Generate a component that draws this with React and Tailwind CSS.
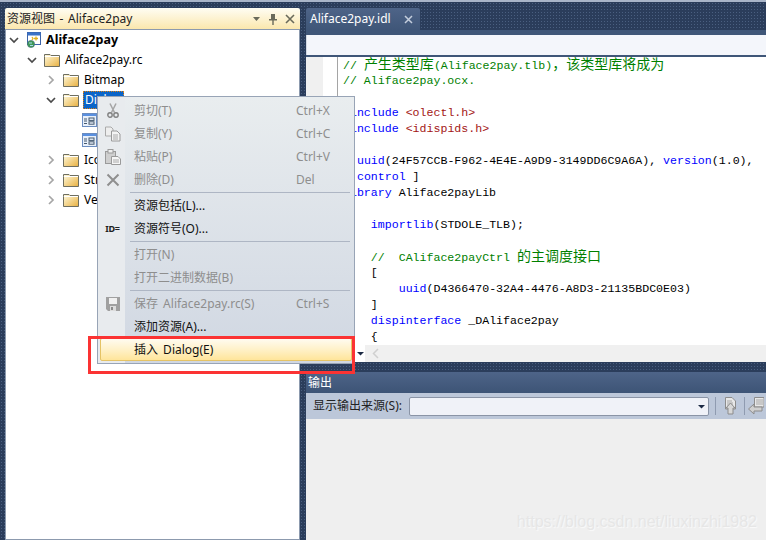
const sans = 'font-["Noto_Sans","Noto_Sans_CJK_SC",sans-serif]';

function Chevron({ open }) {
  return (
    <svg width="10" height="10" viewBox="0 0 10 10" className="shrink-0">
      {open ? (
        <path d="M1 3 L5 7 L9 3" fill="none" stroke="#4a4a4a" strokeWidth="1.7" />
      ) : (
        <path d="M3 1 L7 5 L3 9" fill="none" stroke="#a6a6a6" strokeWidth="1.7" />
      )}
    </svg>
  );
}

function Folder() {
  return (
    <svg width="16" height="14" viewBox="0 0 16 14" className="shrink-0">
      <defs>
        <linearGradient id="fg" x1="0" y1="0" x2="1" y2="1">
          <stop offset="0" stopColor="#fffbe0" />
          <stop offset="1" stopColor="#e8b040" />
        </linearGradient>
      </defs>
      <path d="M0.5 3.5 V1.5 H6 L7 2.5 H15.5 V13.5 H0.5 Z" fill="url(#fg)" stroke="#6e6e60" />
      <path d="M1 3.5 H15" stroke="#fff" />
    </svg>
  );
}

function ProjectIcon() {
  return (
    <svg width="16" height="16" viewBox="0 0 16 16" className="shrink-0">
      <rect x="1.5" y="0.5" width="13" height="12" fill="#fff" stroke="#3b62a8" />
      <rect x="1.5" y="0.5" width="13" height="3" fill="#3b72c8" />
      <path d="M6 5 l1 1.5 -1 1.5 M10 4.5 v4 M8 6.5 h4" stroke="#e0b020" strokeWidth="1.3" fill="none" />
      <circle cx="5" cy="12" r="3.6" fill="#3f9a55" stroke="#4a6a80" strokeWidth="0.6" />
      <path d="M3 11 h3 M4 13.5 h3" stroke="#a8d8f0" />
    </svg>
  );
}

function DialogIcon() {
  return (
    <svg width="15" height="14" viewBox="0 0 15 14" className="shrink-0">
      <rect x="0.5" y="0.5" width="14" height="13" fill="#e8f0fa" stroke="#6a8cc0" />
      <rect x="1" y="1" width="13" height="2" fill="#5a90e0" />
      <path d="M2 6 h3 M2 8 h3 M2 10.5 h3" stroke="#44586e" />
      <rect x="7" y="5" width="5" height="2.4" fill="none" stroke="#44586e" />
      <rect x="7" y="8.8" width="5" height="2.4" fill="none" stroke="#44586e" />
    </svg>
  );
}

function TreeRow({ indent, chevron, open, icon, children }) {
  return (
    <div className={`flex h-5 items-center ${indent}`}>
      <span className="flex w-[17px] shrink-0 justify-start">
        {chevron ? <Chevron open={open} /> : null}
      </span>
      {icon}
      {children}
    </div>
  );
}

function Tree() {
  return (
    <div className="flex-1 border border-[#8c9aae] bg-white text-[12px] text-black">
      <TreeRow indent="pl-[3px]" chevron open icon={<ProjectIcon />}>
        <span className="ml-[4px] text-[12.5px] font-bold">Aliface2pay</span>
      </TreeRow>
      <TreeRow indent="pl-[21px]" chevron open icon={<Folder />}>
        <span className="ml-[5px]">Aliface2pay.rc</span>
      </TreeRow>
      <TreeRow indent="pl-[40px]" chevron icon={<Folder />}>
        <span className="ml-[5px]">Bitmap</span>
      </TreeRow>
      <TreeRow indent="pl-[40px]" chevron open icon={<Folder />}>
        <span className="ml-[4px] flex h-[18px] w-[41px] items-center border border-dotted border-[#e08010] bg-[#0a64c8] pl-[1px] text-white">
          Dialog
        </span>
      </TreeRow>
      <div className="flex h-5 items-center pl-[76px]">
        <DialogIcon />
      </div>
      <div className="flex h-5 items-center pl-[76px]">
        <DialogIcon />
      </div>
      <TreeRow indent="pl-[40px]" chevron icon={<Folder />}>
        <span className="ml-[5px]">Icon</span>
      </TreeRow>
      <TreeRow indent="pl-[40px]" chevron icon={<Folder />}>
        <span className="ml-[5px]">String</span>
      </TreeRow>
      <TreeRow indent="pl-[40px]" chevron icon={<Folder />}>
        <span className="ml-[5px]">Version</span>
      </TreeRow>
    </div>
  );
}

const C = ({ children }) => <span className="text-[#008000]">{children}</span>;
const K = ({ children }) => <span className="text-[#0000ff]">{children}</span>;
const S = ({ children }) => <span className="text-[#a31515]">{children}</span>;
const Z = ({ children }) => <span className={`text-[14px] leading-none ${sans}`}>{children}</span>;

function CodeLine({ children }) {
  return <div className="h-4 whitespace-pre leading-4">{children || " "}</div>;
}

function Code() {
  return (
    <div className='min-w-0 flex-1 overflow-hidden pl-[5px] font-["Liberation_Mono",monospace] text-[11.6px] text-black'>
      <CodeLine><C>// <Z>产生类型库</Z>(Aliface2pay.tlb)<Z>，该类型库将成为</Z></C></CodeLine>
      <CodeLine><C>// Aliface2pay.ocx.</C></CodeLine>
      <CodeLine />
      <CodeLine><K>#include</K> <S>&lt;olectl.h&gt;</S></CodeLine>
      <CodeLine><K>#include</K> <S>&lt;idispids.h&gt;</S></CodeLine>
      <CodeLine />
      <CodeLine>[ <K>uuid</K>(24F57CCB-F962-4E4E-A9D9-3149DD6C9A6A), <K>version</K>(1.0),</CodeLine>
      <CodeLine>  <K>control</K> ]</CodeLine>
      <CodeLine><K>library</K> Aliface2payLib</CodeLine>
      <CodeLine>{"{"}</CodeLine>
      <CodeLine>    <K>importlib</K>(STDOLE_TLB);</CodeLine>
      <CodeLine />
      <CodeLine>    <C>//  CAliface2payCtrl <Z>的主调度接口</Z></C></CodeLine>
      <CodeLine>    [</CodeLine>
      <CodeLine>        <K>uuid</K>(D4366470-32A4-4476-A8D3-21135BDC0E03)</CodeLine>
      <CodeLine>    ]</CodeLine>
      <CodeLine>    <K>dispinterface</K> _DAliface2pay</CodeLine>
      <CodeLine>    {"{"}</CodeLine>
    </div>
  );
}

const G = "#9a9a9a";
const icons = {
  cut: (
    <svg width="12" height="15" viewBox="0 0 12 15">
      <path d="M3 0.5 L7.5 9.5 M9 0.5 L4.5 9.5" stroke="#a4a4a4" strokeWidth="1.5" fill="none" />
      <circle cx="3" cy="12" r="2.2" fill="none" stroke="#808080" strokeWidth="1.4" />
      <circle cx="9" cy="12" r="2.2" fill="none" stroke="#808080" strokeWidth="1.4" />
    </svg>
  ),
  copy: (
    <svg width="16" height="16" viewBox="0 0 16 16">
      <path d="M0.5 1 H6 L8 3 V10 H0.5 Z" fill="#eee" stroke="#aaa" />
      <path d="M6.5 5 H12 L15 8 V15 H6.5 Z" fill="#f4f4f4" stroke={G} />
      <path d="M8 9 h5 M8 11 h5 M8 13 h5" stroke="#aaa" />
    </svg>
  ),
  paste: (
    <svg width="16" height="16" viewBox="0 0 16 16">
      <rect x="0.5" y="2.5" width="10" height="12" fill="#cfcfcf" stroke={G} />
      <rect x="3" y="0.5" width="5" height="3.5" fill="#eee" stroke={G} />
      <path d="M6.5 7.5 H13 L15.5 10 V15.5 H6.5 Z" fill="#f6f6f6" stroke={G} />
      <path d="M8 11 h6 M8 13 h6" stroke="#aaa" />
    </svg>
  ),
  del: (
    <svg width="14" height="14" viewBox="0 0 14 14">
      <path d="M1.5 1.5 L12.5 12.5 M12.5 1.5 L1.5 12.5" stroke="#8f8f8f" strokeWidth="2" />
    </svg>
  ),
  save: (
    <svg width="14" height="14" viewBox="0 0 14 14">
      <path d="M0 0 H14 V14 H2 L0 12 Z" fill="#a0a0a0" />
      <rect x="3" y="1" width="8" height="6" fill="#f0f0f0" />
      <rect x="4" y="9" width="6" height="5" fill="#dcdcdc" />
      <rect x="5" y="10" width="2" height="3" fill="#8a8a8a" />
    </svg>
  ),
};

function Item({ icon, label, shortcut, disabled, active }) {
  return (
    <div className={`relative flex h-[23px] items-center ${disabled ? "text-[#8e8e8e]" : "text-[#111]"}`}>
      {active ? (
        <div className="absolute inset-x-[2px] inset-y-0 rounded-[2px] border border-[#e5c365] bg-gradient-to-b from-[#fffbf0] via-[#fff1c8] to-[#ffe59a]" />
      ) : null}
      <span className="relative flex w-[28px] shrink-0 justify-center pl-[1px]">{icon}</span>
      <span className="relative min-w-0 flex-1 pl-[8px] [word-spacing:2px]">{label}</span>
      {shortcut ? <span className="relative w-[58px] shrink-0">{shortcut}</span> : null}
    </div>
  );
}

function Sep() {
  return (
    <div className="flex h-[3px] items-center pl-[32px] pr-[4px]">
      <div className="h-px w-full bg-[#aeb6c4]" />
    </div>
  );
}

function Menu() {
  return (
    <div className={`absolute left-[97px] top-[96px] z-10 w-[258px] border border-[#98a4b6] py-[2px] text-[12px] bg-[linear-gradient(to_right,#e8ebee_0,#e8ebee_27px,transparent_27px),linear-gradient(to_bottom,#e9edef,#d0d7e2)] ${sans}`}>
      <Item disabled icon={icons.cut} label="剪切(T)" shortcut="Ctrl+X" />
      <Item disabled icon={icons.copy} label="复制(Y)" shortcut="Ctrl+C" />
      <Item disabled icon={icons.paste} label="粘贴(P)" shortcut="Ctrl+V" />
      <Item disabled icon={icons.del} label="删除(D)" shortcut="Del" />
      <Sep />
      <Item label="资源包括(L)..." />
      <Item icon={<span className="text-[9px] font-bold tracking-tight text-[#222]">ID=</span>} label="资源符号(O)..." />
      <Sep />
      <Item disabled label="打开(N)" />
      <Item disabled label="打开二进制数据(B)" />
      <Sep />
      <Item disabled icon={icons.save} label="保存 Aliface2pay.rc(S)" shortcut="Ctrl+S" />
      <Item label="添加资源(A)..." />
      <Item active label="插入 Dialog(E)" />
    </div>
  );
}

const dots = "bg-[radial-gradient(#4a5f80_0.7px,transparent_0.8px)] bg-[length:3px_3px]";

export default function App() {
  return (
    <div className={`relative flex h-[540px] w-[766px] flex-col overflow-hidden bg-[#2b3d5b] ${sans}`}>
      <div className="h-[2px] shrink-0 bg-[#a9b5c9]" />
      <div className={`flex min-h-0 flex-1 ${dots}`}>
        {/* left tool window */}
        <div className="ml-[5px] mt-[6px] flex w-[295px] shrink-0 flex-col">
          <div className="flex h-[21px] shrink-0 items-center justify-between rounded-t-[2px] bg-gradient-to-b from-[#fffdf3] to-[#fbe7ad] pl-[2px] pr-[5px] text-[12px] text-[#222]">
            <span className="[word-spacing:1.5px]">资源视图 - Aliface2pay</span>
            <span className="flex items-center gap-[7px]">
              <svg width="9" height="9" viewBox="0 0 9 9"><path d="M1 3 H8 L4.5 7 Z" fill="#6a6a5a" /></svg>
              <svg width="10" height="12" viewBox="0 0 10 12"><path d="M3 1 H7 V6 H9 V7.5 H5.7 V12 H4.3 V7.5 H1 V6 H3 Z" fill="#6a6a5a" /></svg>
              <svg width="10" height="10" viewBox="0 0 10 10"><path d="M1 1 L9 9 M9 1 L1 9" stroke="#6a6a5a" strokeWidth="1.6" /></svg>
            </span>
          </div>
          <Tree />
        </div>

        {/* right column */}
        <div className="ml-[6px] flex min-w-0 flex-1 flex-col">
          <div className="mt-[6px] flex h-[22px] shrink-0">
            <div className="flex w-[114px] items-center justify-between rounded-t-[2px] bg-gradient-to-b from-[#4e6488] to-[#3f5678] pl-[4px] pr-[7px] text-[12px] text-white">
              <span>Aliface2pay.idl</span>
              <svg width="9" height="9" viewBox="0 0 9 9"><path d="M1 1 L8 8 M8 1 L1 8" stroke="#c4cedd" strokeWidth="1.5" /></svg>
            </div>
          </div>
          <div className="h-[5px] shrink-0 bg-[#3f5678]" />
          <div className="h-[20px] shrink-0 border-l border-[#d4dae4] bg-[#f4f6fb]" />
          <div className="h-[2px] shrink-0 bg-[#3f5678]" />
          <div className="flex h-[288px] shrink-0 bg-white">
            <div className="w-[17px] shrink-0 bg-[#f0f0f0]" />
            <div className="w-[15px] shrink-0 border-r border-[#a5a5a5]" />
            <Code />
          </div>
          <div className="flex h-[17px] shrink-0 items-center bg-[#f0f0f0]">
            <div className="ml-[49px] flex h-[17px] w-[10px] items-center justify-center bg-white">
              <svg width="7" height="5" viewBox="0 0 7 5"><path d="M0 1 H7 L3.5 4.5 Z" fill="#1c2a44" /></svg>
            </div>
            <svg className="ml-[7px]" width="7" height="11" viewBox="0 0 7 11"><path d="M6 1 L1.5 5.5 L6 10" fill="none" stroke="#d0d0d0" strokeWidth="1.5" /></svg>
          </div>
          <div className="h-[10px] shrink-0" />
          <div className="flex h-[21px] shrink-0 items-center bg-gradient-to-b from-[#4e6488] to-[#3d5476] pl-[2px] text-[12px] text-white">
            输出
          </div>
          <div className="flex h-[26px] shrink-0 items-center overflow-hidden bg-[#bcc7d9] pl-[7px] text-[12px] text-[#222]">
            <span className="w-[96px] shrink-0">显示输出来源(S):</span>
            <div className="flex h-[19px] w-[300px] shrink-0 items-center justify-end rounded-[2px] border border-[#8a94a6] bg-[#f0f2f8] pr-[3px]">
              <svg width="7" height="5" viewBox="0 0 7 5"><path d="M0 1 H7 L3.5 4.5 Z" fill="#1c2a44" /></svg>
            </div>
            <div className="ml-[6px] h-[18px] w-px shrink-0 bg-[#8f9bb0]" />
            <svg className="ml-[7px] shrink-0" width="14" height="18" viewBox="0 0 14 18">
              <path d="M2.5 0.5 H9 L12.5 4 V12 H2.5 Z" fill="#e8e8e8" stroke="#8c8c8c" />
              <path d="M4 4 h5 M4 6 h6 M4 8 h6" stroke="#a8a8a8" />
              <path d="M7.5 6 L12 11 H10 V17 H5 V11 H3 Z" fill="#d8d8d8" stroke="#8c8c8c" />
            </svg>
            <div className="ml-[7px] h-[18px] w-px shrink-0 bg-[#8f9bb0]" />
            <svg className="ml-[3px] shrink-0" width="16" height="18" viewBox="0 0 16 18">
              <path d="M6.5 0.5 H16 V10 H6.5 Z" fill="#e8e8e8" stroke="#8c8c8c" />
              <path d="M8 3 h7 M8 5 h7 M8 7 h7" stroke="#a8a8a8" />
              <path d="M0.5 12 L6 7 V10 H14 V14 H6 V17 Z" fill="#d0d0d0" stroke="#8c8c8c" />
            </svg>
          </div>
          <div className='flex min-h-0 flex-1 items-end justify-end bg-[#efefef] pb-[8px] pr-[9px] font-["Liberation_Sans",sans-serif] text-[16px] leading-[20px] text-[#e6e6e6] [text-shadow:1px_1px_1px_#fafafa]'>
            https://blog.csdn.net/liuxinzhi1982
          </div>
        </div>
      </div>

      <Menu />
      {/* red annotation rectangle */}
      <div className="absolute left-[88px] top-[336px] z-20 h-[38px] w-[267px] border-[3px] border-[#fb3333]" />
    </div>
  );
}
